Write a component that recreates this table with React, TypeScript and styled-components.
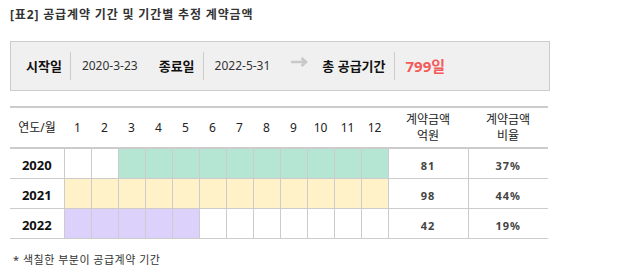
import React from "react";
import styled, { createGlobalStyle } from "styled-components";

const GlobalStyle = createGlobalStyle`
  html, body {
    margin: 0;
    padding: 0;
    background: #ffffff;
  }
  body {
    font-family: "Noto Sans", "Noto Sans CJK KR", sans-serif;
    color: #222222;
  }
`;

const Page = styled.div`
  padding: 6px 10px 0 10px;
  width: 540px;
`;

const Title = styled.h2`
  margin: 0;
  font-size: 12px;
  line-height: 18px;
  font-weight: 700;
  color: #333333;
  letter-spacing: 0.85px;
`;

const Summary = styled.div`
  margin-top: 17px;
  box-sizing: border-box;
  height: 50px;
  width: 540px;
  border: 1px solid #cccccc;
  background: #f0f0f0;
  display: flex;
  align-items: center;
  padding-left: 15px;
`;

const Label = styled.span<{ $gap?: number }>`
  font-size: 13px;
  font-weight: 700;
  color: #111111;
  line-height: 20px;
  margin-left: ${(p) => p.$gap ?? 0}px;
`;

const Divider = styled.span`
  width: 1px;
  height: 28px;
  background: #cccccc;
  margin: 0 11px 0 8px;
`;

const Value = styled.span`
  font-size: 12px;
  color: #333333;
  line-height: 20px;
`;

const Total = styled.span`
  font-size: 15px;
  font-weight: 700;
  color: #f35b5b;
  line-height: 20px;
`;

const Arrow = styled.svg`
  margin-left: 21px;
  margin-bottom: 8px;
  flex: none;
`;

const Table = styled.table`
  margin-top: 15px;
  width: 538px;
  table-layout: fixed;
  border-collapse: collapse;
  border-top: 2px solid #cccccc;
`;

const Th = styled.th`
  height: 39px;
  padding: 0;
  font-size: 12px;
  font-weight: 400;
  line-height: 16px;
  color: #222222;
  text-align: center;
  border-bottom: 2px solid #cccccc;
`;

const Td = styled.td<{ $fill?: string; $first?: boolean }>`
  height: 29px;
  padding: 0;
  text-align: center;
  background: ${(p) => p.$fill ?? "#ffffff"};
  border-bottom: 1px solid #cccccc;
  border-left: ${(p) => (p.$first ? "none" : "1px solid #cccccc")};
`;

const Year = styled.span`
  font-size: 13px;
  font-weight: 700;
  color: #111111;
`;

const Num = styled.span`
  font-size: 11px;
  font-weight: 700;
  color: #444444;
  letter-spacing: 1px;
`;

const Note = styled.p`
  margin: 13px 0 0 3px;
  font-size: 11px;
  line-height: 16px;
  color: #333333;
  letter-spacing: 0.5px;
`;

const COLORS: Record<string, string> = {
  green: "#b5e6d4",
  yellow: "#fff1c8",
  purple: "#dcd1fb",
};

const rows = [
  { year: "2020", from: 3, to: 12, color: COLORS.green, amount: "81", ratio: "37%" },
  { year: "2021", from: 1, to: 12, color: COLORS.yellow, amount: "98", ratio: "44%" },
  { year: "2022", from: 1, to: 5, color: COLORS.purple, amount: "42", ratio: "19%" },
];

const months = Array.from({ length: 12 }, (_, i) => i + 1);

export default function App() {
  return (
    <>
      <GlobalStyle />
      <Page>
        <Title>[표2] 공급계약 기간 및 기간별 추정 계약금액</Title>
        <Summary>
          <Label>시작일</Label>
          <Divider />
          <Value>2020-3-23</Value>
          <Label $gap={21}>종료일</Label>
          <Divider />
          <Value>2022-5-31</Value>
          <Arrow width="17" height="10" viewBox="0 0 17 10">
            <path
              d="M0 5 H15 M10.5 1 L15 5 L10.5 9"
              fill="none"
              stroke="#c8c8c8"
              strokeWidth="2.6"
            />
          </Arrow>
          <Label $gap={14}>총 공급기간</Label>
          <Divider />
          <Total>799일</Total>
        </Summary>
        <Table>
          <colgroup>
            <col style={{ width: 54 }} />
            {months.map((m) => (
              <col key={m} style={{ width: 27 }} />
            ))}
            <col style={{ width: 80 }} />
            <col style={{ width: 80 }} />
          </colgroup>
          <thead>
            <tr>
              <Th>연도/월</Th>
              {months.map((m) => (
                <Th key={m}>{m}</Th>
              ))}
              <Th>
                계약금액
                <br />
                억원
              </Th>
              <Th>
                계약금액
                <br />
                비율
              </Th>
            </tr>
          </thead>
          <tbody>
            {rows.map((r) => (
              <tr key={r.year}>
                <Td $first>
                  <Year>{r.year}</Year>
                </Td>
                {months.map((m) => (
                  <Td key={m} $fill={m >= r.from && m <= r.to ? r.color : undefined} />
                ))}
                <Td>
                  <Num>{r.amount}</Num>
                </Td>
                <Td>
                  <Num>{r.ratio}</Num>
                </Td>
              </tr>
            ))}
          </tbody>
        </Table>
        <Note>* 색칠한 부분이 공급계약 기간</Note>
      </Page>
    </>
  );
}
